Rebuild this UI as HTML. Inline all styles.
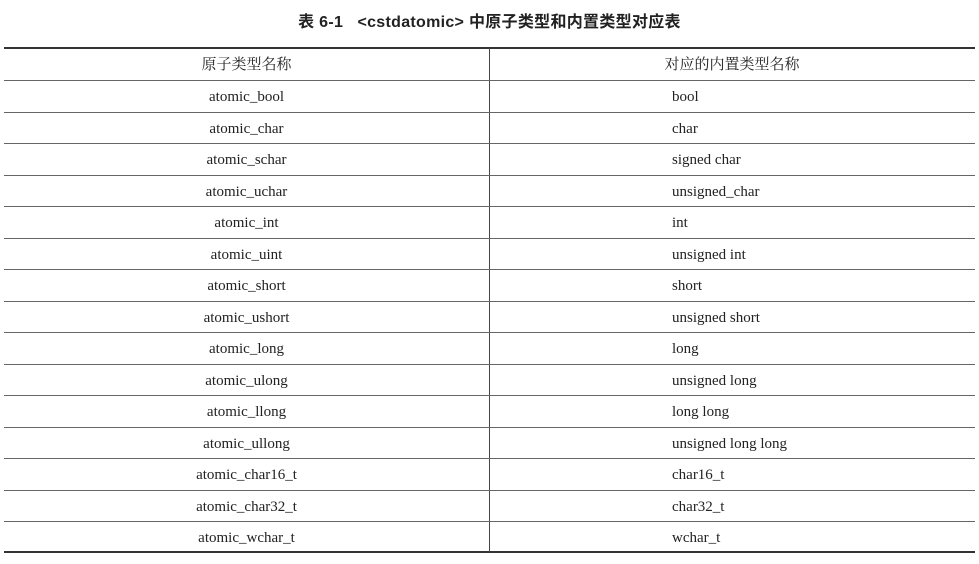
<!DOCTYPE html>
<html><head><meta charset="utf-8"><style>
body{margin:0;width:979px;height:564px;background:#fff;position:relative;overflow:hidden;font-family:"Liberation Serif","Noto Serif CJK SC",serif;color:#222}
.t{position:absolute;top:8px;left:0;width:979px;text-align:center;font:bold 16px "Liberation Sans","Noto Sans CJK SC",sans-serif;color:#222;letter-spacing:0.3px}
.h{position:absolute;left:4px;width:971px;height:1px;background:#666}
.v{position:absolute;left:489px;top:48px;width:1px;height:504px;background:#444}
.r{position:absolute;left:4px;width:971px;height:31.5px;line-height:35px;font-size:15px}
.a{position:absolute;left:0;width:485px;text-align:center}
.b{position:absolute;left:668px}
.hd{font-family:"Noto Serif CJK SC",serif;font-size:15px;line-height:31.5px}
</style></head><body>
<div class="t">表 6-1&nbsp;&nbsp;&nbsp;&lt;cstdatomic&gt; 中原子类型和内置类型对应表</div>
<div class="h" style="top:47px;height:2px;background:#333"></div>
<div class="h" style="top:551px;height:2px;background:#333"></div>
<div class="v"></div>
<div class="r hd" style="top:48px"><span class="a">原子类型名称</span><span class="a" style="left:485px;width:486px">对应的内置类型名称</span></div>
<div class="h" style="top:80px"></div>
<div class="r" style="top:80px"><span class="a">atomic_bool</span><span class="b">bool</span></div>
<div class="h" style="top:111.5px"></div>
<div class="r" style="top:111.5px"><span class="a">atomic_char</span><span class="b">char</span></div>
<div class="h" style="top:143px"></div>
<div class="r" style="top:143px"><span class="a">atomic_schar</span><span class="b">signed char</span></div>
<div class="h" style="top:174.5px"></div>
<div class="r" style="top:174.5px"><span class="a">atomic_uchar</span><span class="b">unsigned_char</span></div>
<div class="h" style="top:206px"></div>
<div class="r" style="top:206px"><span class="a">atomic_int</span><span class="b">int</span></div>
<div class="h" style="top:237.5px"></div>
<div class="r" style="top:237.5px"><span class="a">atomic_uint</span><span class="b">unsigned int</span></div>
<div class="h" style="top:269px"></div>
<div class="r" style="top:269px"><span class="a">atomic_short</span><span class="b">short</span></div>
<div class="h" style="top:300.5px"></div>
<div class="r" style="top:300.5px"><span class="a">atomic_ushort</span><span class="b">unsigned short</span></div>
<div class="h" style="top:332px"></div>
<div class="r" style="top:332px"><span class="a">atomic_long</span><span class="b">long</span></div>
<div class="h" style="top:363.5px"></div>
<div class="r" style="top:363.5px"><span class="a">atomic_ulong</span><span class="b">unsigned long</span></div>
<div class="h" style="top:395px"></div>
<div class="r" style="top:395px"><span class="a">atomic_llong</span><span class="b">long long</span></div>
<div class="h" style="top:426.5px"></div>
<div class="r" style="top:426.5px"><span class="a">atomic_ullong</span><span class="b">unsigned long long</span></div>
<div class="h" style="top:458px"></div>
<div class="r" style="top:458px"><span class="a">atomic_char16_t</span><span class="b">char16_t</span></div>
<div class="h" style="top:489.5px"></div>
<div class="r" style="top:489.5px"><span class="a">atomic_char32_t</span><span class="b">char32_t</span></div>
<div class="h" style="top:521px"></div>
<div class="r" style="top:521px"><span class="a">atomic_wchar_t</span><span class="b">wchar_t</span></div>
</body></html>
